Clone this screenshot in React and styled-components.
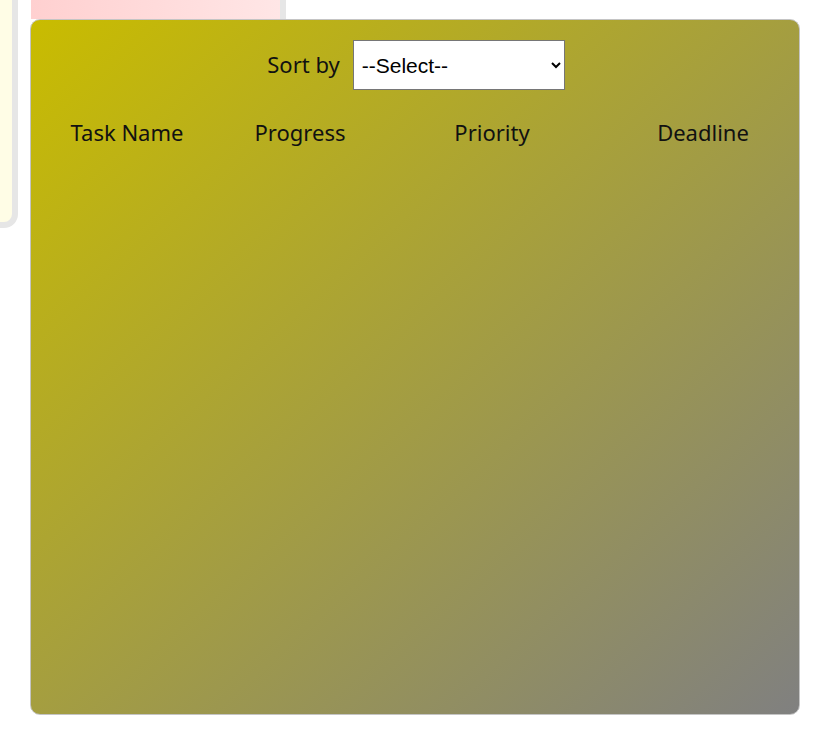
import React from 'react';
import styled, { createGlobalStyle } from 'styled-components';

const GlobalStyle = createGlobalStyle`
  body {
    margin: 0;
    background: #ffffff;
    font-family: "Noto Sans", "Open Sans", sans-serif;
  }
`;

const Page = styled.div`
  display: flex;
  align-items: flex-start;
  gap: 12px;
`;

const SideCard = styled.div`
  width: 12px;
  height: 222px;
  background: #fffde6;
  border-right: 6px solid #e6e6e6;
  border-bottom: 6px solid #e6e6e6;
  border-bottom-right-radius: 14px;
`;

const Main = styled.div`
  display: flex;
  flex-direction: column;
`;

const PeekCard = styled.div`
  width: 249px;
  height: 19px;
  margin-left: 1px;
  background: linear-gradient(to right, #ffd0d0, #ffe6e6);
  border-right: 6px solid #e6e6e6;
`;

const Panel = styled.section`
  box-sizing: border-box;
  width: 770px;
  height: 696px;
  border: 1px solid #c4c4c4;
  border-radius: 10px;
  background: linear-gradient(to bottom right, #c9bc00, #808080);
  display: flex;
  flex-direction: column;
  align-items: stretch;
`;

const SortRow = styled.div`
  display: flex;
  justify-content: center;
  align-items: center;
  gap: 13px;
  margin-top: 20px;
  padding-left: 2px;
`;

const Label = styled.label`
  font-size: 22px;
  line-height: 28px;
  margin-top: -2px;
  color: #111;
`;

const Select = styled.select`
  width: 212px;
  height: 50px;
  font-family: "Liberation Sans", Arial, sans-serif;
  font-size: 21px;
  padding: 0 4px;
  background: #fff;
  border: 1px solid #767676;
  border-radius: 0;
  color: #000;
`;

const HeaderRow = styled.div`
  display: grid;
  grid-template-columns: 150px 136px 188px 174px;
  column-gap: 30px;
  padding-left: 21px;
  margin-top: 27px;
`;

const HeadCell = styled.div`
  text-align: center;
  font-size: 22px;
  line-height: 30px;
  color: #111;
`;

const columns = ['Task Name', 'Progress', 'Priority', 'Deadline'];

export default function App() {
  return (
    <>
      <GlobalStyle />
      <Page>
        <SideCard />
        <Main>
          <PeekCard />
          <Panel>
            <SortRow>
              <Label htmlFor="sort">Sort by</Label>
              <Select id="sort" defaultValue="">
                <option value="">--Select--</option>
                <option value="progress">Progress</option>
                <option value="priority">Priority</option>
                <option value="deadline">Deadline</option>
              </Select>
            </SortRow>
            <HeaderRow>
              {columns.map((c) => (
                <HeadCell key={c}>{c}</HeadCell>
              ))}
            </HeaderRow>
          </Panel>
        </Main>
      </Page>
    </>
  );
}
